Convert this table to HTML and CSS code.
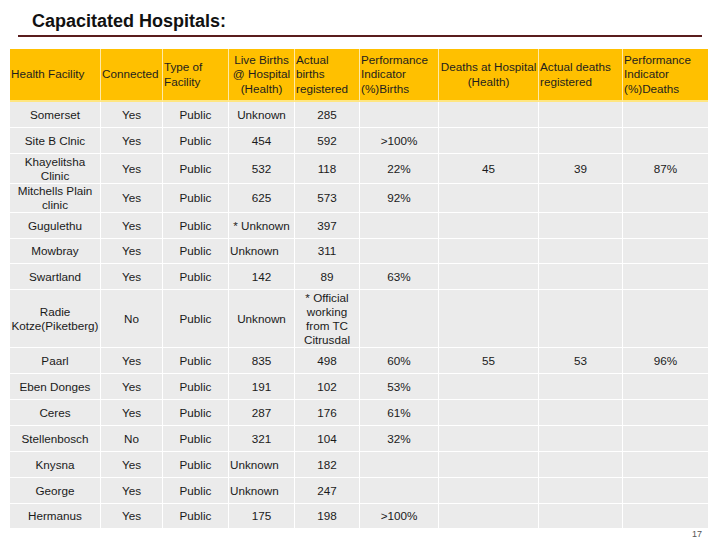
FILE: index.html
```html
<!DOCTYPE html>
<html>
<head>
<meta charset="utf-8">
<link rel="stylesheet" href="styles.css">
</head>
<body>
<div class="title">Capacitated Hospitals:</div>
<table class="grid">
  <colgroup>
    <col class="c1"><col class="c2"><col class="c3"><col class="c4"><col class="c5"><col class="c6"><col class="c7"><col class="c8"><col class="c9">
  </colgroup>
  <thead>
    <tr class="hrow">
      <th class="l">Health Facility</th>
      <th class="l">Connected</th>
      <th class="l">Type of<br>Facility</th>
      <th>Live Births<br>@ Hospital<br>(Health)</th>
      <th class="l">Actual<br>births<br>registered</th>
      <th class="l">Performance<br>Indicator<br>(%)Births</th>
      <th>Deaths at Hospital<br>(Health)</th>
      <th class="l">Actual deaths<br>registered</th>
      <th class="l">Performance<br>Indicator<br>(%)Deaths</th>
    </tr>
  </thead>
  <tbody>
    <tr class="h26"><td>Somerset</td><td>Yes</td><td>Public</td><td>Unknown</td><td>285</td><td></td><td></td><td></td><td></td></tr>
    <tr class="h26"><td>Site B Clnic</td><td>Yes</td><td>Public</td><td>454</td><td>592</td><td>&gt;100%</td><td></td><td></td><td></td></tr>
    <tr class="h30"><td>Khayelitsha<br>Clinic</td><td>Yes</td><td>Public</td><td>532</td><td>118</td><td>22%</td><td>45</td><td>39</td><td>87%</td></tr>
    <tr class="h28"><td>Mitchells Plain<br>clinic</td><td>Yes</td><td>Public</td><td>625</td><td>573</td><td>92%</td><td></td><td></td><td></td></tr>
    <tr class="h26"><td>Gugulethu</td><td>Yes</td><td>Public</td><td>* Unknown</td><td>397</td><td></td><td></td><td></td><td></td></tr>
    <tr class="h25"><td>Mowbray</td><td>Yes</td><td>Public</td><td class="l">Unknown</td><td>311</td><td></td><td></td><td></td><td></td></tr>
    <tr class="h26"><td>Swartland</td><td>Yes</td><td>Public</td><td>142</td><td>89</td><td>63%</td><td></td><td></td><td></td></tr>
    <tr class="h58"><td>Radie<br>Kotze(Piketberg)</td><td>No</td><td>Public</td><td>Unknown</td><td class="tight">* Official<br>working<br>from TC<br>Citrusdal</td><td></td><td></td><td></td><td></td></tr>
    <tr class="h26"><td>Paarl</td><td>Yes</td><td>Public</td><td>835</td><td>498</td><td>60%</td><td>55</td><td>53</td><td>96%</td></tr>
    <tr class="h26"><td>Eben Donges</td><td>Yes</td><td>Public</td><td>191</td><td>102</td><td>53%</td><td></td><td></td><td></td></tr>
    <tr class="h26"><td>Ceres</td><td>Yes</td><td>Public</td><td>287</td><td>176</td><td>61%</td><td></td><td></td><td></td></tr>
    <tr class="h26"><td>Stellenbosch</td><td>No</td><td>Public</td><td>321</td><td>104</td><td>32%</td><td></td><td></td><td></td></tr>
    <tr class="h26"><td>Knysna</td><td>Yes</td><td>Public</td><td class="l">Unknown</td><td>182</td><td></td><td></td><td></td><td></td></tr>
    <tr class="h26"><td>George</td><td>Yes</td><td>Public</td><td class="l">Unknown</td><td>247</td><td></td><td></td><td></td><td></td></tr>
    <tr class="h25"><td>Hermanus</td><td>Yes</td><td>Public</td><td>175</td><td>198</td><td>&gt;100%</td><td></td><td></td><td></td></tr>
  </tbody>
</table>
<div class="pagenum">17</div>
</body>
</html>
```

FILE: styles.css
```css
html, body {
  margin: 0;
  padding: 0;
  background: #ffffff;
}

body {
  font-family: "Liberation Sans", Arial, sans-serif;
  color: #1a1a1a;
  width: 720px;
  height: 540px;
  overflow: hidden;
}

.title {
  margin-left: 18px;
  width: 670px;
  padding: 10px 0 3px 14px;
  font-size: 18px;
  line-height: 22px;
  font-weight: bold;
  color: #111111;
  border-bottom: 2px solid #5a1d1d;
}

.grid {
  margin: 12px 0 0 10px;
  border-collapse: separate;
  border-spacing: 0;
  table-layout: fixed;
  width: 698px;
  font-size: 11.7px;
  line-height: 14px;
}

.c1 { width: 91px; }
.c2 { width: 62px; }
.c3 { width: 66px; }
.c4 { width: 66px; }
.c5 { width: 65px; }
.c6 { width: 79px; }
.c7 { width: 100px; }
.c8 { width: 84px; }
.c9 { width: 85px; }

.grid th,
.grid td {
  padding: 0;
  text-align: center;
  vertical-align: middle;
  white-space: nowrap;
  overflow: visible;
}

.grid th {
  background: #ffc000;
  font-weight: normal;
  color: #1e1e1e;
  line-height: 14.5px;
  border-right: 1px solid #ffe9a6;
  border-bottom: 2px solid #ffe680;
}

.grid td {
  background: #ebebeb;
  border-right: 1px solid #ffffff;
  border-bottom: 1px solid #ffffff;
}

.grid th:last-child,
.grid td:last-child {
  border-right: none;
}

.grid .l {
  text-align: left;
  padding-left: 1px;
}

.grid .tight {
  line-height: 14px;
}

.hrow { height: 53px; }
.h25 { height: 25px; }
.h26 { height: 26px; }
.h28 { height: 28px; }
.h30 { height: 30px; }
.h58 { height: 58px; }

.pagenum {
  width: 702px;
  text-align: right;
  font-size: 9px;
  line-height: 10px;
  color: #555555;
}
```
